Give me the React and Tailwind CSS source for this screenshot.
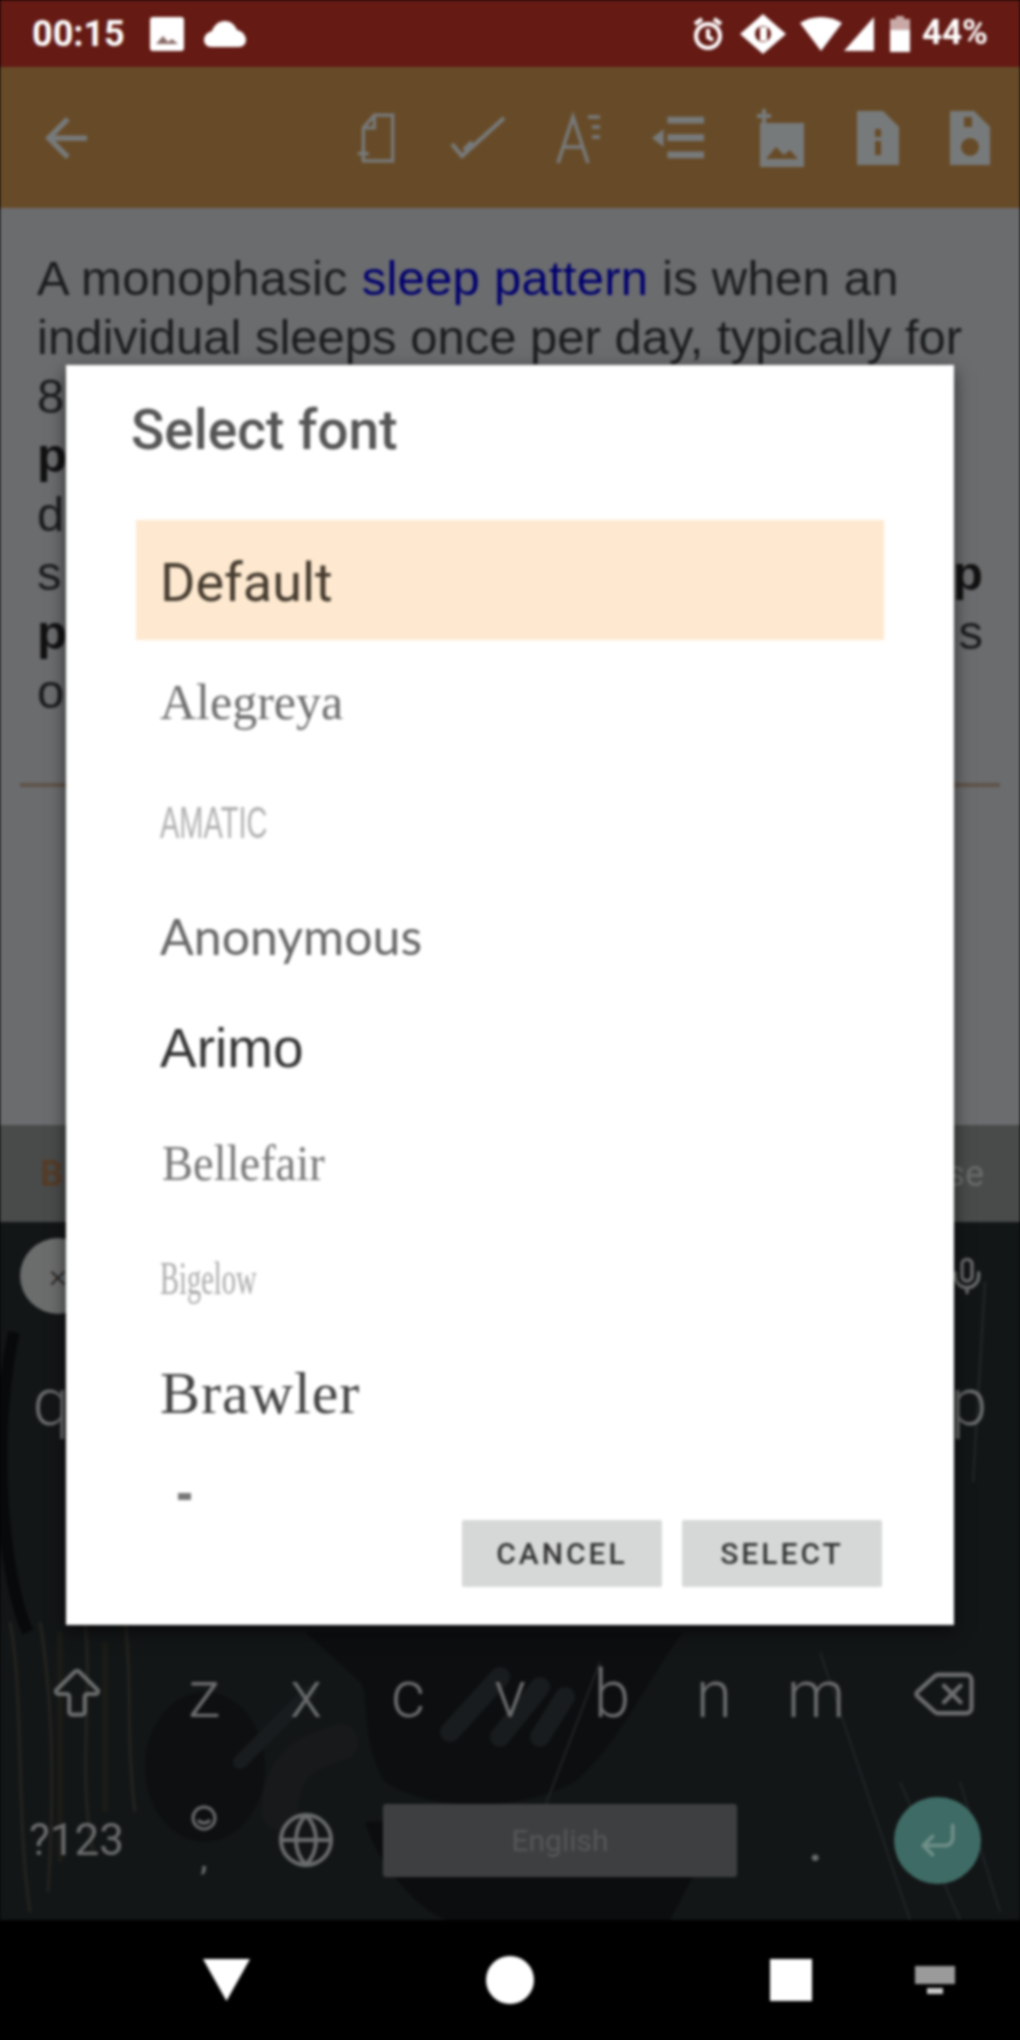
import React from "react";
import { Mic, Delete, Globe, ArrowBigUp, CornerDownLeft } from "lucide-react";

const sans = "font-['Roboto',sans-serif]";

const fonts = [
  { name: "Alegreya", h: "h-[125px]", cls: "font-['Liberation_Serif',serif] text-[50px] text-[#6e6e6e]" },
  { name: "AMATIC", h: "h-[115px]", cls: "font-['Liberation_Sans',sans-serif] text-[44px] text-[#b0b0b0] origin-left scale-x-[0.66] font-light" },
  { name: "Anonymous", h: "h-[112px]", cls: "font-['Lato',sans-serif] text-[50px] text-[#666]" },
  { name: "Arimo", h: "h-[113px]", cls: "font-['Liberation_Sans',sans-serif] text-[55px] text-[#333]" },
  { name: "Bellefair", h: "h-[117px]", cls: "font-['Liberation_Serif',serif] text-[50px] text-[#777] origin-left scale-x-[0.93] ml-[2px]" },
  { name: "Bigelow", h: "h-[113px]", cls: "font-['Liberation_Serif',serif] text-[46px] text-[#aaa] origin-left scale-x-[0.62]" },
  { name: "Brawler", h: "h-[115px]", cls: "font-['Liberation_Serif',serif] text-[60px] text-[#444] tracking-[1px]" },
];

function StatusBar() {
  return (
    <div className={`h-[67px] bg-[#651a14] flex items-center justify-between pl-[32px] pr-[32px] text-white ${sans}`}>
      <div className="flex items-center">
        <span className="text-[36px] font-bold w-[118px]">00:15</span>
        <svg width="34" height="34" viewBox="0 0 34 34" fill="white">
          <path d="M3 0h28a3 3 0 0 1 3 3v28a3 3 0 0 1-3 3H3a3 3 0 0 1-3-3V3a3 3 0 0 1 3-3z" />
          <path d="M6 27l7-8 5 6 4-3 6 5z" fill="#8a6a66" />
        </svg>
        <svg className="ml-[20px]" width="42" height="26" viewBox="0 0 42 26" fill="white">
          <path d="M21 0c6 0 10 4 12 9 5 1 9 5 9 10 0 4-3 7-7 7H7c-4 0-7-3-7-7 0-5 4-8 8-9 2-6 7-10 13-10z" />
        </svg>
      </div>
      <div className="flex items-center">
        <svg width="32" height="36" viewBox="0 0 32 36" fill="none" stroke="white" strokeWidth="4">
          <circle cx="16" cy="20" r="12" />
          <path d="M16 13v8l5 3M3 8l7-5M29 8l-7-5" />
        </svg>
        <svg className="ml-[16px]" width="46" height="40" viewBox="0 0 46 40">
          <path d="M23 0l23 20-23 20L0 20z" fill="white" />
          <circle cx="23" cy="20" r="8" fill="#651a14" />
          <rect x="20" y="13" width="7" height="14" fill="white" />
        </svg>
        <svg className="ml-[14px]" width="42" height="34" viewBox="0 0 42 34" fill="white">
          <path d="M0 6C12-2 30-2 42 6L21 34z" />
        </svg>
        <svg className="ml-[2px]" width="30" height="34" viewBox="0 0 30 34" fill="white">
          <path d="M30 0v34H0z" />
        </svg>
        <svg className="ml-[16px]" width="20" height="36" viewBox="0 0 20 36">
          <path d="M6 0h8v3h6v33H0V3h6z" fill="#c9a9a6" />
          <path d="M0 14h20v22H0z" fill="white" />
        </svg>
        <span className="ml-[12px] text-[35px] font-bold">44%</span>
      </div>
    </div>
  );
}

function Toolbar() {
  return (
    <div className="h-[141px] bg-[#674b28] relative flex items-center pl-[45px] pr-[30px] text-[#777a7b]">
      <svg width="42" height="42" viewBox="4 4 16 16" fill="currentColor">
        <path d="M20 11H7.83l5.59-5.59L12 4l-8 8 8 8 1.41-1.41L7.83 13H20v-2z" />
      </svg>
      <div className="ml-auto flex items-center gap-[50px]">
        <svg width="44" height="54" viewBox="0 0 48 54" fill="none" stroke="currentColor" strokeWidth="3.5">
          <path d="M20 2h20v50H8V16z" />
          <path d="M20 2v14H8" />
          <path d="M2 44h12M8 38v12" />
        </svg>
        <svg width="56" height="44" viewBox="0 0 56 44" fill="none" stroke="currentColor" strokeWidth="4">
          <path d="M2 28l10 12 42-38" />
          <path d="M14 34l8-8" />
        </svg>
        <svg width="46" height="54" viewBox="0 0 46 54" fill="none" stroke="currentColor" strokeWidth="3.5">
          <path d="M2 52L17 6l15 46M8 36h18" />
          <path d="M32 6h12M36 16h8M36 26h8" />
        </svg>
        <svg width="52" height="52" viewBox="0 0 54 52" fill="currentColor">
          <path d="M16 4h38v7H16zM16 22h38v7H16zM16 40h38v7H16z" />
          <path d="M0 26l12-9v18z" />
        </svg>
        <svg width="52" height="58" viewBox="0 0 48 58" fill="currentColor">
          <path d="M4 14h44v44H4z" />
          <path d="M8 0v14M1 7h14" stroke="currentColor" strokeWidth="4" />
          <path d="M10 50l10-12 8 8 6-5 8 9z" fill="#674b28" />
        </svg>
        <svg width="44" height="54" viewBox="0 0 42 54" fill="currentColor">
          <path d="M0 0h26l16 16v38H0z" />
          <path d="M18 18h6v8h-6zM18 30h6v14h-6z" fill="#674b28" />
        </svg>
        <svg width="40" height="54" viewBox="0 0 40 54" fill="currentColor">
          <path d="M0 0h24l16 16v38H0z" />
          <circle cx="20" cy="36" r="9" fill="#674b28" />
          <path d="M14 6h8v10h-8z" fill="#674b28" />
        </svg>
      </div>
    </div>
  );
}

function Article() {
  return (
    <div className="h-[917px] bg-[#6b6c6e] px-[37px] pt-[41px] relative">
      <div className="font-['Liberation_Sans',sans-serif] text-[49px] leading-[59px] text-[#1a1b1c] whitespace-nowrap">
        <div className="tracking-[0.25px]">A monophasic <span className="text-[#00006e]">sleep pattern</span> is when an</div>
        <div>individual sleeps once per day, typically for</div>
        <div>8</div>
        <div className="font-bold text-[#111]">p</div>
        <div>d</div>
        <div className="flex justify-between w-[946px]"><span>s</span><span className="font-bold text-[#111]">p</span></div>
        <div className="flex justify-between w-[946px]"><span className="font-bold text-[#111]">p</span><span>s</span></div>
        <div>o</div>
      </div>
      <div className="absolute left-[20px] right-[20px] top-[575px] h-[4px] bg-[#5f5348]" />
    </div>
  );
}

function Strip() {
  return (
    <div className="h-[97px] bg-[#494b4b] flex items-center justify-between pl-[40px] pr-[36px] font-['Roboto',sans-serif] text-[36px]">
      <span className="text-[#553c28] font-bold">B</span>
      <span className="text-[#6a6c6c]">ise</span>
    </div>
  );
}

function KeyboardArt() {
  return (
    <svg className="absolute inset-0" width="1020" height="698" viewBox="0 0 1020 698" fill="none">
      <path d="M305 410H683C640 470 620 520 575 560C520 590 430 590 385 560C360 520 370 470 360 460Z" fill="#0c0e0f" />
      <path d="M365 600C380 650 430 698 450 698H670C690 660 715 620 715 590Z" fill="#0b0d0e" />
      <ellipse cx="205" cy="545" rx="60" ry="75" fill="#0d0f10" />
      <path d="M240 540l70-70" stroke="#191c1e" strokeWidth="14" strokeLinecap="round" />
      <path d="M280 590c0-50 30-60 60-70" stroke="#17191b" strokeWidth="36" strokeLinecap="round" />
      <path d="M450 510l50-55M500 515l40-50M540 515l25-40" stroke="#191c1e" strokeWidth="20" strokeLinecap="round" />
      <path d="M10 400c14 70 6 200 20 290M40 400c10 60 16 150 8 270M85 400c8 70-8 150 8 230M125 400c8 60 0 110 10 190" stroke="#24241f" strokeWidth="3" />
      <path d="M60 410v230M105 420v170" stroke="#1c1c17" strokeWidth="5" />
      <path d="M600 440L520 650M820 430l90 268M900 560l60 138M960 560l40 130" stroke="#222527" strokeWidth="2" />
      <path d="M14 110c-24 110-10 250 14 300" stroke="#08090a" strokeWidth="12" />
      <path d="M985 60l-12 200" stroke="#26292a" strokeWidth="2" />
    </svg>
  );
}

function Letter({ ch }) {
  return <div className="w-[102px] flex items-center justify-center">{ch}</div>;
}

function Keyboard() {
  return (
    <div className={`h-[698px] bg-[#131617] relative text-[#6b6d6d] ${sans} font-light`}>
      <KeyboardArt />
      <div className="relative flex flex-col">
        <div className="h-[107px] flex items-center justify-between pl-[20px] pr-[33px]">
          <div className="w-[76px] h-[76px] rounded-full bg-[#6b6c6c] flex items-center justify-center text-[#222] text-[34px]">×</div>
          <Mic size={40} />
        </div>
        {/* the middle of this row and all of the next sit behind the dialog */}
        <div className="h-[146px] flex justify-between text-[66px]">
          <Letter ch="q" />
          <Letter ch="p" />
        </div>
        <div className="h-[146px]" />
        <div className="h-[146px] flex text-[66px]">
          <div className="w-[153px] flex items-center justify-center"><ArrowBigUp size={62} strokeWidth={1.6} /></div>
          {"zxcvbnm".split("").map((c) => <Letter key={c} ch={c} />)}
          <div className="w-[153px] flex items-center justify-center"><Delete size={66} strokeWidth={1.6} /></div>
        </div>
        <div className="h-[146px] flex items-center">
          <div className="w-[153px] flex justify-center text-[44px] font-normal">?123</div>
          <div className="w-[102px] flex flex-col items-center text-[30px] leading-none">
            <svg width="26" height="26" viewBox="0 0 26 26" fill="none" stroke="currentColor" strokeWidth="3"><circle cx="13" cy="13" r="11" /><path d="M7 15c3 4 9 4 12 0" /></svg>
            <span className="mt-[14px] font-bold">,</span>
          </div>
          <div className="w-[102px] flex justify-center"><Globe size={60} strokeWidth={1.6} /></div>
          <div className="w-[354px] h-[73px] ml-[26px] rounded-[3px] bg-[#3e3f40] flex items-center justify-center text-[30px] text-[#565858] font-normal">English</div>
          <div className="w-[157px] flex justify-center text-[44px] font-bold pt-[12px]">.</div>
          <div className="w-[87px] h-[87px] rounded-full bg-[#3e6b65] flex items-center justify-center text-[#6f9089]"><CornerDownLeft size={44} /></div>
        </div>
      </div>
    </div>
  );
}

function NavBar() {
  return (
    <div className="h-[120px] bg-black flex items-center relative pl-[203px]">
      <svg width="47" height="42" viewBox="0 0 47 42" fill="white"><path d="M0 0h47L23.5 42z" /></svg>
      <div className="ml-[236px] w-[48px] h-[48px] rounded-full bg-white" />
      <div className="ml-[236px] w-[42px] h-[42px] bg-white" />
      <svg className="ml-[103px]" width="40" height="28" viewBox="0 0 40 28" fill="#9a9a9a">
        <path d="M0 0h40v18H0z" />
        <path d="M12 22h16v6H12z" fill="#c8c8c8" />
      </svg>
    </div>
  );
}

function FontDialog() {
  return (
    <div className={`absolute left-[66px] top-[365px] w-[888px] h-[1260px] bg-white flex flex-col shadow-[0_6px_16px_rgba(0,0,0,0.6)] ${sans}`}>
      <div className="h-[155px] pl-[65px] pt-[31px] text-[55px] font-medium text-[#555] leading-[68px]">Select font</div>
      <div className="h-[985px] mx-[70px] overflow-hidden">
        <div className="h-[120px] bg-[#fee9d0] flex items-center pl-[24px] pt-[4px] text-[54px] text-[#443a2e]">Default</div>
        {fonts.map((f) => (
          <div key={f.name} className={`${f.h} flex items-center pl-[24px]`}>
            <span className={`inline-block ${f.cls}`}>{f.name}</span>
          </div>
        ))}
        <div className="pl-[42px] pt-[43px]"><div className="w-[13px] h-[7px] bg-[#777]" /></div>
      </div>
      <div className="flex justify-end gap-[20px] pr-[72px] mt-[15px]">
        <button className="w-[200px] h-[67px] bg-[#d6d8d8] rounded-[2px] text-[30px] font-medium tracking-[3px] text-[#333]">CANCEL</button>
        <button className="w-[200px] h-[67px] bg-[#d6d8d8] rounded-[2px] text-[30px] font-medium tracking-[3px] text-[#333]">SELECT</button>
      </div>
    </div>
  );
}

export default function App() {
  return (
    <div className="w-[1020px] h-[2040px] overflow-hidden bg-black">
      <div className="relative w-[1020px] h-[2040px] flex flex-col blur-[1.5px]">
        <StatusBar />
        <Toolbar />
        <Article />
        <Strip />
        <Keyboard />
        <NavBar />
        <FontDialog />
      </div>
    </div>
  );
}
